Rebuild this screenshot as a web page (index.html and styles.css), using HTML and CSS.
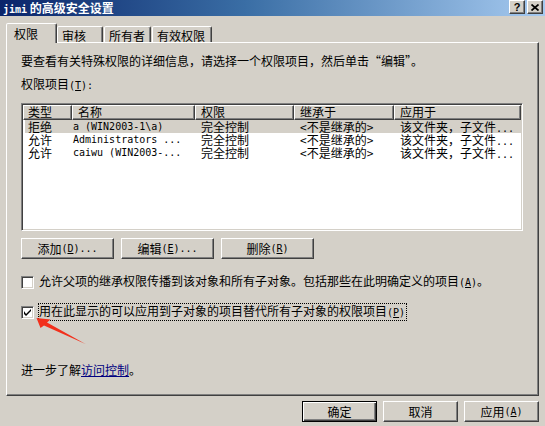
FILE: index.html
```html
<!DOCTYPE html>
<html lang="zh-CN">
<head>
<meta charset="utf-8">
<title>jimi 的高级安全设置</title>
<link rel="stylesheet" href="styles.css">
</head>
<body>
<div class="titlebar">
  <span class="title"><span class="m mb">jimi</span> 的高级安全设置</span>
  <div class="tb-btns">
    <span class="tb-btn q">?</span>
    <span class="tb-btn"><svg width="8" height="7" viewBox="0 0 8 7"><path d="M0.5 0.5 L7.5 6.5 M7.5 0.5 L0.5 6.5" stroke="#000" stroke-width="1.7" fill="none"/></svg></span>
  </div>
</div>

<div class="tabs">
  <div class="tab active w1">权限</div>
  <div class="tab w2">审核</div>
  <div class="tab w3">所有者</div>
  <div class="tab w4">有效权限</div>
</div>

<div class="panel">
  <p class="intro">要查看有关特殊权限的详细信息，请选择一个权限项目，然后单击“编辑”。</p>
  <div class="label">权限项目<span class="m">(<u>T</u>):</span></div>

  <div class="list">
    <div class="lhead">
      <div class="hc c1">类型</div>
      <div class="hc c2">名称</div>
      <div class="hc c3">权限</div>
      <div class="hc c4">继承于</div>
      <div class="hc c5">应用于</div>
    </div>
    <div class="row sel">
      <div class="rc r1">拒绝</div>
      <div class="rc r2 m">a (WIN2003-1\a)</div>
      <div class="rc r3">完全控制</div>
      <div class="rc r4">&lt;不是继承的&gt;</div>
      <div class="rc r5">该文件夹，子文件<span class="m">...</span></div>
    </div>
    <div class="row">
      <div class="rc r1">允许</div>
      <div class="rc r2 m">Administrators ...</div>
      <div class="rc r3">完全控制</div>
      <div class="rc r4">&lt;不是继承的&gt;</div>
      <div class="rc r5">该文件夹，子文件<span class="m">...</span></div>
    </div>
    <div class="row">
      <div class="rc r1">允许</div>
      <div class="rc r2 m">caiwu (WIN2003-...</div>
      <div class="rc r3">完全控制</div>
      <div class="rc r4">&lt;不是继承的&gt;</div>
      <div class="rc r5">该文件夹，子文件<span class="m">...</span></div>
    </div>
  </div>

  <div class="btnrow">
    <div class="btn">添加<span class="m">(<u>D</u>)...</span></div>
    <div class="btn">编辑<span class="m">(<u>E</u>)...</span></div>
    <div class="btn">删除<span class="m">(<u>R</u>)</span></div>
  </div>

  <div class="check c-first">
    <span class="box"></span>
    <span class="ctext">允许父项的继承权限传播到该对象和所有子对象。包括那些在此明确定义的项目<span class="m">(<u>A</u>)</span>。</span>
  </div>
  <div class="check c-second">
    <span class="box"><svg width="7" height="7" viewBox="0 0 7 7"><path d="M0 2 L0 5 L2 7 L7 2 L7 0 L2 5 Z" fill="#000"/></svg></span>
    <span class="ctext focus">用在此显示的可以应用到子对象的项目替代所有子对象的权限项目<span class="m">(<u>P</u>)</span></span>
  </div>

  <svg class="arrow" width="60" height="34" viewBox="0 0 60 34"><polygon points="6.5,4 20.5,5.5 17,8.5 55.5,30 14,11.5 10.5,14" fill="#f2301c"/></svg>

  <p class="more">进一步了解<a href="#" class="link">访问控制</a>。</p>
</div>

<div class="footer">
  <div class="btn fbtn def">确定</div>
  <div class="btn fbtn">取消</div>
  <div class="btn fbtn">应用<span class="m">(<u>A</u>)</span></div>
</div>
</body>
</html>
```

FILE: styles.css
```css
* { box-sizing: border-box; }
html, body { margin: 0; padding: 0; }
body {
  width: 545px;
  height: 426px;
  overflow: hidden;
  background: #d4d0c8;
  color: #000;
  font-family: "Noto Sans CJK SC", "DejaVu Sans", sans-serif;
  font-size: 12px;
  line-height: 14px;
}
.m { font-family: "DejaVu Sans Mono", "Liberation Mono", monospace; font-size: 10px; }
.mb { font-weight: bold; }
u { text-decoration: underline; }

/* title bar */
.titlebar {
  height: 16px;
  background: linear-gradient(to right, #0a246a, #3a6ea5 45%, #a6caf0);
  display: flex;
  justify-content: space-between;
  align-items: flex-start;
  padding: 0 2px 0 3px;
}
.title { color: #fff; font-weight: bold; line-height: 15px; white-space: nowrap; }
.tb-btns { display: flex; gap: 2px; }
.tb-btn {
  width: 16px;
  height: 14px;
  background: #d4d0c8;
  border: 1px solid;
  border-color: #fff #404040 #404040 #fff;
  box-shadow: inset -1px -1px #808080;
  display: flex;
  align-items: center;
  justify-content: center;
}
.tb-btn.q { font: bold 11px/12px "Liberation Sans", sans-serif; }

/* tabs */
.tabs {
  display: flex;
  align-items: flex-end;
  height: 19px;
  margin-top: 7px;
  padding-left: 8px;
}
.tab {
  height: 16px;
  background: #d4d0c8;
  border: 1px solid;
  border-bottom: none;
  border-color: #fff #404040 transparent #fff;
  box-shadow: inset -1px 0 #808080;
  border-radius: 2px 2px 0 0;
  padding: 2px 0 0 4px;
  line-height: 14px;
  white-space: nowrap;
}
.tab.active {
  height: 20px;
  margin: 0 0 -1px -2px;
  padding: 3px 0 0 7px;
  position: relative;
  z-index: 2;
}
.w1 { width: 51px; }
.w2 { width: 46px; }
.w3 { width: 47px; margin-left: 1px; }
.w4 { width: 60px; margin-left: 1px; }

/* panel */
.panel {
  position: relative;
  margin-left: 6px;
  width: 533px;
  height: 354px;
  border-top: 1px solid #fff;
  border-left: 1px solid #fff;
  border-right: 1px solid #404040;
  border-bottom: 1px solid #404040;
  box-shadow: inset -1px -1px #808080;
  padding: 11px 0 0 14px;
}
.intro { margin: 0; white-space: nowrap; }
.label { margin-top: 9px; }

.list {
  margin-top: 10px;
  width: 502px;
  height: 128px;
  background: #fff;
  border: 1px solid;
  border-color: #808080 #fff #fff #808080;
  box-shadow: inset 1px 1px #404040, inset -1px -1px #d4d0c8;
  padding: 1px;
  overflow: hidden;
}
.lhead { display: flex; height: 15px; }
.hc {
  height: 15px;
  background: #d4d0c8;
  border: 1px solid;
  border-color: #fff #404040 #404040 #fff;
  box-shadow: inset -1px -1px #808080;
  padding-left: 5px;
  line-height: 12px;
  white-space: nowrap;
}
.c1 { width: 49px; padding-left: 4px; }
.c2 { width: 123px; }
.c3 { width: 99px; }
.c4 { width: 100px; }
.c5 { width: 127px; }

.row { display: flex; height: 13px; line-height: 13px; margin-left: 2px; }
.row.sel { background: #d4d0c8; }
.rc { white-space: nowrap; }
.r1 { width: 47px; padding-left: 3px; }
.r2 { width: 123px; padding-left: 1px; }
.r3 { width: 99px; padding-left: 6px; }
.r4 { width: 100px; padding-left: 6px; }
.r5 { width: 125px; padding-left: 6px; }

/* buttons */
.btnrow { display: flex; gap: 7px; margin-top: 7px; }
.btn {
  width: 93px;
  height: 21px;
  background: #d4d0c8;
  border: 1px solid;
  border-color: #fff #404040 #404040 #fff;
  box-shadow: inset -1px -1px #808080;
  display: flex;
  align-items: center;
  justify-content: center;
  white-space: nowrap;
}

/* checkboxes */
.check { display: flex; align-items: center; height: 16px; }
.c-first { margin-top: 15px; }
.c-second { margin-top: 14px; }
.box {
  width: 13px;
  height: 13px;
  background: #fff;
  border: 1px solid;
  border-color: #808080 #fff #fff #808080;
  box-shadow: inset 1px 1px #404040, inset -1px -1px #d4d0c8;
  margin-right: 4px;
  display: flex;
  align-items: center;
  justify-content: center;
  flex: none;
}
.ctext { border: 1px solid transparent; padding-right: 1px; line-height: 14px; white-space: nowrap; }
.ctext.focus { border: 1px dotted #000; }

.arrow { position: absolute; left: 23px; top: 271px; }

.more { margin: 43px 0 0; white-space: nowrap; }
.link { color: #000080; text-decoration: underline; }

/* footer */
.footer {
  display: flex;
  justify-content: flex-end;
  gap: 6px;
  margin-top: 5px;
  padding-right: 6px;
}
.fbtn { width: 75px; height: 21px; }
.def {
  border: 1px solid #000;
  box-shadow: inset 1px 1px #fff, inset -1px -1px #404040, inset -2px -2px #808080;
}
```
